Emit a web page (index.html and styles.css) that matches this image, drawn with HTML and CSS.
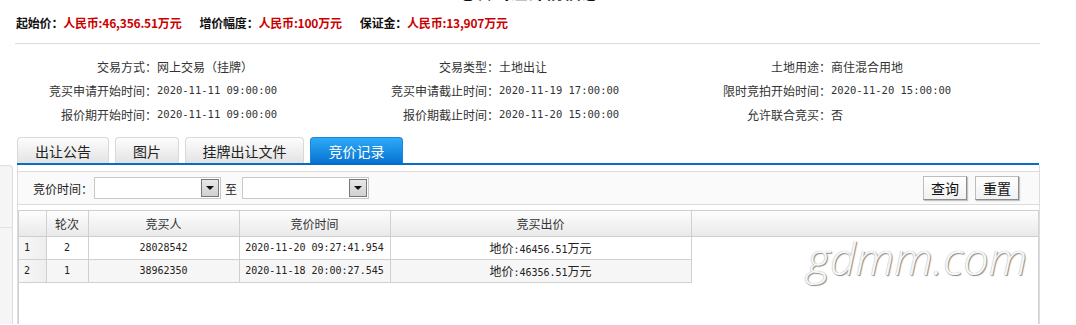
FILE: index.html
```html
<!DOCTYPE html>
<html lang="zh-CN">
<head>
    <meta charset="UTF-8">
    <title>竞价记录</title>
    <link rel="stylesheet" href="styles.css">
</head>
<body>
    <div class="page">
        <h2 class="title">地块出让详情信息</h2>

        <div class="price-bar">
            <span class="price-item"><b>起始价：</b><em>人民币:46,356.51万元</em></span>
            <span class="price-item"><b>增价幅度：</b><em>人民币:100万元</em></span>
            <span class="price-item"><b>保证金：</b><em>人民币:13,907万元</em></span>
        </div>

        <div class="info-grid">
            <span class="info-label">交易方式：</span>
            <span class="info-value">网上交易（挂牌）</span>
            <span class="info-label">交易类型：</span>
            <span class="info-value">土地出让</span>
            <span class="info-label">土地用途：</span>
            <span class="info-value">商住混合用地</span>

            <span class="info-label">竞买申请开始时间：</span>
            <span class="info-value num">2020-11-11 09:00:00</span>
            <span class="info-label">竞买申请截止时间：</span>
            <span class="info-value num">2020-11-19 17:00:00</span>
            <span class="info-label">限时竞拍开始时间：</span>
            <span class="info-value num">2020-11-20 15:00:00</span>

            <span class="info-label">报价期开始时间：</span>
            <span class="info-value num">2020-11-11 09:00:00</span>
            <span class="info-label">报价期截止时间：</span>
            <span class="info-value num">2020-11-20 15:00:00</span>
            <span class="info-label">允许联合竞买：</span>
            <span class="info-value">否</span>
        </div>
    </div>

    <div class="tabs">
        <div class="tab" style="width: 92px">出让公告</div>
        <div class="tab" style="width: 64px">图片</div>
        <div class="tab" style="width: 119px">挂牌出让文件</div>
        <div class="tab active" style="width: 93px">竞价记录</div>
    </div>

    <div class="board">
        <div class="side-strip">
            <div class="strip-head"></div>
        </div>

        <div class="panel">
            <div class="toolbar">
                <span class="field-label">竞价时间：</span>
                <div class="combo"><span class="combo-btn"></span></div>
                <span class="field-sep">至</span>
                <div class="combo"><span class="combo-btn"></span></div>
                <div class="toolbar-actions">
                    <button class="btn">查询</button>
                    <button class="btn">重置</button>
                </div>
            </div>

            <div class="grid">
                <table class="bid-table">
                    <colgroup>
                        <col style="width: 27px">
                        <col style="width: 42px">
                        <col style="width: 151px">
                        <col style="width: 151px">
                        <col style="width: 301px">
                        <col>
                    </colgroup>
                    <thead>
                        <tr>
                            <th class="rownum"></th>
                            <th>轮次</th>
                            <th>竞买人</th>
                            <th>竞价时间</th>
                            <th>竞买出价</th>
                            <th class="filler"></th>
                        </tr>
                    </thead>
                    <tbody>
                        <tr>
                            <td class="rownum num">1</td>
                            <td class="num">2</td>
                            <td class="num">28028542</td>
                            <td class="num">2020-11-20 09:27:41.954</td>
                            <td>地价<span class="num">:46456.51</span>万元</td>
                            <td class="filler"></td>
                        </tr>
                        <tr class="alt">
                            <td class="rownum num">2</td>
                            <td class="num">1</td>
                            <td class="num">38962350</td>
                            <td class="num">2020-11-18 20:00:27.545</td>
                            <td>地价<span class="num">:46356.51</span>万元</td>
                            <td class="filler"></td>
                        </tr>
                    </tbody>
                </table>
            </div>

            <div class="watermark">gdmm.com</div>
        </div>
    </div>
</body>
</html>
```

FILE: styles.css
```css
* {
    margin: 0;
    padding: 0;
    box-sizing: border-box;
}

html, body {
    overflow: hidden;
}

body {
    background-color: #fff;
    font-family: "Noto Sans CJK SC", sans-serif;
    font-size: 12px;
    color: #333;
}

.num {
    font-family: "DejaVu Sans Mono", monospace;
    font-size: 10px;
}

.page {
    width: 1040px;
    padding-left: 15px;
}

.title {
    height: 21px;
    margin-top: -19px;
    font-size: 18px;
    line-height: 21px;
    font-weight: bold;
    text-align: center;
    color: #111;
}

/* price summary */
.price-bar {
    display: flex;
    gap: 18px;
    padding: 11px 0 10px 1px;
    line-height: 20px;
    border-bottom: 1px solid #dcdcdc;
}

.price-item {
    letter-spacing: -0.2px;
}

.price-item b {
    color: #111;
}

.price-item em {
    font-style: normal;
    font-weight: bold;
    color: #cc0000;
}

/* info rows */
.info-grid {
    display: grid;
    grid-template-columns: 142px 198px 144px 190px 142px 1fr;
    grid-auto-rows: 24px;
    align-items: center;
    margin-top: 10px;
}

.info-grid .num {
    font-size: 10.5px;
}

.info-label {
    text-align: right;
    color: #333;
}

.info-value {
    color: #333;
}

/* tabs */
.tabs {
    display: flex;
    gap: 6px;
    width: 1022px;
    height: 28px;
    margin: 11px 0 0 17px;
    border-bottom: 2px solid #0b6cc4;
}

.tab {
    height: 26px;
    line-height: 26px;
    font-size: 14px;
    text-align: center;
    color: #222;
    border: 1px solid #d8d8d8;
    border-bottom: none;
    border-radius: 4px 4px 0 0;
    background: linear-gradient(#fdfdfd, #e3e3e3);
}

.tab.active {
    color: #fff;
    border-color: #1a86e0;
    background: linear-gradient(#2daaf7, #0873d3);
}

/* lower board */
.board {
    display: flex;
    height: 159px;
}

.side-strip {
    width: 13px;
    margin-right: 4px;
    background-color: #f5f5f5;
    border: 1px solid #dedede;
    border-left: none;
    border-bottom: none;
    border-top-right-radius: 4px;
}

.strip-head {
    height: 62px;
    border-bottom: 1px solid #e2e2e2;
}

.panel {
    position: relative;
    width: 1023px;
    padding-top: 6px;
    border-left: 1px solid #dcdcdc;
    border-right: 1px solid #dcdcdc;
}

.toolbar {
    display: flex;
    align-items: center;
    height: 34px;
    padding: 0 20px 0 15px;
    background-color: #fafafa;
    border-top: 1px solid #dcdcdc;
    border-bottom: 1px solid #dcdcdc;
}

.field-label {
    margin-right: 1px;
    white-space: nowrap;
    color: #222;
}

.field-sep {
    margin: 0 5px 0 4px;
    color: #222;
}

.combo {
    display: flex;
    flex-shrink: 0;
    justify-content: flex-end;
    align-items: center;
    width: 127px;
    height: 22px;
    padding-right: 1px;
    background-color: #fff;
    border: 1px solid #c8c8c8;
}

.combo-btn {
    position: relative;
    width: 18px;
    height: 18px;
    background: linear-gradient(#e8e8e8, #d0d0d0);
    border: 1px solid #777;
}

.combo-btn::after {
    content: "";
    position: absolute;
    left: 4px;
    top: 6px;
    border-left: 4px solid transparent;
    border-right: 4px solid transparent;
    border-top: 4px solid #111;
}

.toolbar-actions {
    display: flex;
    gap: 8px;
    margin-left: auto;
}

.btn {
    width: 44px;
    height: 24px;
    font-family: "Noto Sans CJK SC", sans-serif;
    font-size: 14px;
    color: #111;
    background: linear-gradient(#fff, #f1f1f1);
    border: 1px solid #bdbdbd;
    border-right-color: #8c8c8c;
    border-bottom-color: #8c8c8c;
    box-shadow: 1px 1px 1px #c4c4c4;
    cursor: pointer;
}

/* bid grid */
.grid {
    height: 120px;
    margin-top: 5px;
    border: 1px solid #cfcfcf;
    border-bottom: none;
    border-right-color: #d4d4d4;
}

.bid-table {
    width: 100%;
    table-layout: fixed;
    border-collapse: collapse;
}

.bid-table th {
    height: 25px;
    font-weight: normal;
    color: #333;
    background: linear-gradient(#fdfdfd, #e9e9e9);
    border-right: 1px solid #d0d0d0;
    border-bottom: 1px solid #cdcdcd;
}

.bid-table th.filler {
    border-right: none;
}

.bid-table td {
    height: 23px;
    text-align: center;
    color: #222;
    background-color: #fff;
    border-right: 1px solid #d0d0d0;
    border-bottom: 1px solid #d0d0d0;
}

.bid-table tr.alt td {
    background-color: #f6f6f6;
}

.bid-table td.rownum,
.bid-table tr.alt td.rownum {
    text-align: left;
    padding-left: 5px;
    background: linear-gradient(90deg, #f7f7f7, #eeeeee);
}

.bid-table td.filler,
.bid-table tr.alt td.filler {
    background: none;
    border: none;
}

.watermark {
    position: absolute;
    left: 789px;
    top: 70px;
    font-family: "Open Sans", sans-serif;
    font-size: 45px;
    line-height: 46px;
    font-weight: 300;
    font-style: italic;
    color: #f7f7f7;
    text-shadow: 1px 1px 1px #8a8a8a, 0 0 1px #a0a0a0;
}
```
